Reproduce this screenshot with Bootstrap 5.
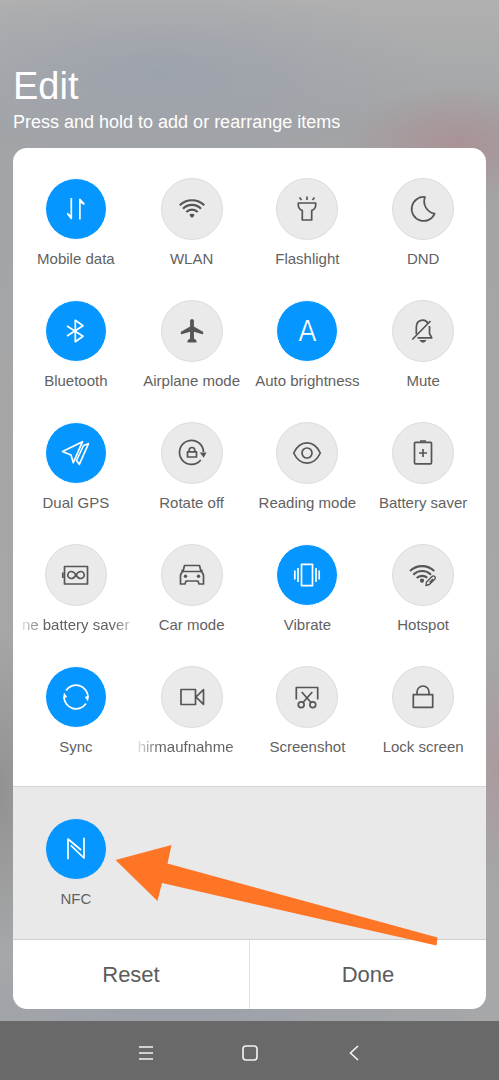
<!DOCTYPE html>
<html lang="en">
<head>
<meta charset="utf-8">
<meta name="viewport" content="width=device-width, initial-scale=1">
<title>Edit quick settings</title>
<link href="https://cdn.jsdelivr.net/npm/bootstrap@5.3.0/dist/css/bootstrap.min.css" rel="stylesheet">
<style>
  body {
    font-family: "Liberation Sans", Arial, sans-serif;
    color: #626262;
    background:
      radial-gradient(120px 60px at 92% 145px, rgba(172,142,146,.8) 0, rgba(172,142,146,0) 100%),
      radial-gradient(280px 90px at 32% 75px, rgba(154,161,173,.8) 0, rgba(154,161,173,0) 100%),
      radial-gradient(40px 120px at 100% 770px, rgba(172,152,155,.9) 0, rgba(172,152,155,0) 100%),
      radial-gradient(60px 160px at 0 790px, rgba(143,143,142,.9) 0, rgba(143,143,142,0) 100%),
      radial-gradient(300px 60px at 35% 1010px, rgba(152,158,170,.7) 0, rgba(152,158,170,0) 100%),
      linear-gradient(#b0b0b0 0, #a2a4a6 130px, #a6a6a6 500px, #a5a7a9 100%);
  }
  .page-head { padding: 62px 13px 13px; color: #fff; }
  .page-title { font-size: 38px; line-height: 48px; font-weight: 400; }
  .page-hint { font-size: 18px; line-height: 25px; }
  .panel { margin: 0 13px 12px; border-radius: 14px; background: #fff; }
  .tiles { padding: 30px 5px 0; row-gap: 2px; }
  .tile { height: 120px; color: inherit; font-size: 15px; line-height: 24px; }
  .disc {
    width: 62px; height: 62px; margin-bottom: 7px;
    background: #eaeaea; border: 1px solid #dcdcdc; color: #555;
  }
  .disc.on { background: #0597ff; border-color: #fff; color: #fff; }
  .spare .disc.on { border-color: #e9e9e9; }
  .disc svg {
    width: 32px; height: 32px; overflow: visible;
    fill: none; stroke: currentColor; stroke-width: 1.7; stroke-linejoin: round;
  }
  .disc svg.waves { stroke-width: 2.1; }
  .disc svg .solid { fill: currentColor; stroke: none; }
  .letter { font-family: Inter, sans-serif; font-weight: 300; font-size: 28px; line-height: 28px; }
  .tile-name { white-space: nowrap; }
  .tile-name.rolling {
    width: 108px; overflow: hidden; text-align: left;
    -webkit-mask-image: linear-gradient(90deg, rgba(0,0,0,.2), #000 22px, #000 90px, rgba(0,0,0,.4));
    mask-image: linear-gradient(90deg, rgba(0,0,0,.2), #000 22px, #000 90px, rgba(0,0,0,.4));
  }
  .spare { background: #e9e9e9; border-top: 1px solid #d4d4d4; padding: 31px 5px 1px; }
  .pointer { left: 102px; top: 58px; z-index: 2; width: 323px; height: 102px; pointer-events: none; }
  .actions { border-top: 1px solid #cfcfcf; }
  .action { height: 69px; font-size: 22px; color: #5c5c5c; background: none; }
  .action + .action { border-left: 1px solid #e2e2e2 !important; }
  .sysbar { background: #696969; height: 59px; padding-top: 3px; }
  .sysbar button { width: 104px; }
  .sysbar svg { fill: none; stroke: #f4f4f4; stroke-width: 1.6; }
</style>
</head>
<body class="d-flex flex-column min-vh-100">
<header class="page-head">
  <h1 class="page-title m-0">Edit</h1>
  <p class="page-hint m-0">Press and hold to add or rearrange items</p>
</header>

<main class="panel">
  <div class="tiles row row-cols-4 g-0">
    <button type="button" class="tile col btn p-0 border-0 d-flex flex-column align-items-center">
      <span class="disc on rounded-circle d-flex align-items-center justify-content-center"><svg viewBox="-16 -16 32 32"><path d="M-4.700-11V10"/><path d="M3.900 10.500V-10"/><path class="solid" d="M-4.500 10.700V6.500L-9 3.500V5.500ZM3.700-11V-6.500L8.500-3.700V-5.700Z"/></svg></span>
      <span class="tile-name">Mobile data</span>
    </button>
    <button type="button" class="tile col btn p-0 border-0 d-flex flex-column align-items-center">
      <span class="disc rounded-circle d-flex align-items-center justify-content-center"><svg class="waves" viewBox="-16 -16 32 32"><path d="M-12.300-3.700A17.500 17.500 0 0 1 12.300-3.700M-9-.300A12.500 12.500 0 0 1 9-.300M-5.700 3A8 8 0 0 1 5.700 3"/><path class="solid" d="M-2.500 5.800Q-2.200 4.700 0 4.700T2.500 5.800Q2 7.500 0 9Q-2 7.500-2.500 5.800Z"/></svg></span>
      <span class="tile-name">WLAN</span>
    </button>
    <button type="button" class="tile col btn p-0 border-0 d-flex flex-column align-items-center">
      <span class="disc rounded-circle d-flex align-items-center justify-content-center"><svg viewBox="-16 -16 32 32"><path d="M0-12.500V-9M-7.500-11.500-5.500-9M7.500-11.500 5.500-9M-8.700-6H8.700V-4Q8.700 0 4.700 1.500V11H-4.700V1.500Q-8.700 0-8.700-4Z"/></svg></span>
      <span class="tile-name">Flashlight</span>
    </button>
    <button type="button" class="tile col btn p-0 border-0 d-flex flex-column align-items-center">
      <span class="disc rounded-circle d-flex align-items-center justify-content-center"><svg viewBox="-16 -16 32 32"><path d="M2-12A12 12 0 1 0 11.700 4.700A12.500 12.500 0 0 1 2-12Z"/></svg></span>
      <span class="tile-name">DND</span>
    </button>

    <button type="button" class="tile col btn p-0 border-0 d-flex flex-column align-items-center">
      <span class="disc on rounded-circle d-flex align-items-center justify-content-center"><svg viewBox="-16 -16 32 32"><path d="M-9-5 7 5.300-.700 10.700V-10.700L7-5.300-9 5"/></svg></span>
      <span class="tile-name">Bluetooth</span>
    </button>
    <button type="button" class="tile col btn p-0 border-0 d-flex flex-column align-items-center">
      <span class="disc rounded-circle d-flex align-items-center justify-content-center"><svg viewBox="-16 -16 32 32"><path class="solid" d="M-1.900-10.500Q-1.700-12 0-12T1.900-10.500V-4.500L11 .700Q12 3.300 10.500 3.200L1.900.700 2 7.500 4.500 9.500V11.500H-4.500V9.500L-2 7.500-1.900.700-10.500 3.200Q-12 3.300-11 .700L-1.900-4.500Z"/></svg></span>
      <span class="tile-name">Airplane mode</span>
    </button>
    <button type="button" class="tile col btn p-0 border-0 d-flex flex-column align-items-center">
      <span class="disc on rounded-circle d-flex align-items-center justify-content-center"><span class="letter">A</span></span>
      <span class="tile-name">Auto brightness</span>
    </button>
    <button type="button" class="tile col btn p-0 border-0 d-flex flex-column align-items-center">
      <span class="disc rounded-circle d-flex align-items-center justify-content-center"><svg viewBox="-16 -16 32 32"><path d="M-10.700 8.500 7.500-10M-6.700 3V-3.500C-6.700-12 2.500-12.500 4.800-7.700M6.500-5V2.500L8.800 6.800H-5.500"/><path class="solid" d="M-3.700 9H3.700Q2 11.700 0 11.700T-3.700 9Z"/></svg></span>
      <span class="tile-name">Mute</span>
    </button>

    <button type="button" class="tile col btn p-0 border-0 d-flex flex-column align-items-center">
      <span class="disc on rounded-circle d-flex align-items-center justify-content-center"><svg viewBox="-16 -16 32 32"><path d="M-13.500-1.500 6.500-11.300-2.700 9.700-5 2Z"/><path d="M7.500-7.500 12.500-9.300 3.300 11.300.5 7.500Z" /></svg></span>
      <span class="tile-name">Dual GPS</span>
    </button>
    <button type="button" class="tile col btn p-0 border-0 d-flex flex-column align-items-center">
      <span class="disc rounded-circle d-flex align-items-center justify-content-center"><svg viewBox="-16 -16 32 32"><path d="M8.800 7A12 12 0 1 1 11.500-1"/><path class="solid" d="M7.800-.500H14.500L11.700 4.700Z"/><path d="M-4.500-1.200H4.500V4H-4.500ZM-2.800-1.200V-3Q-2.500-5.500 0-5.500T2.800-3V-1.200"/></svg></span>
      <span class="tile-name">Rotate off</span>
    </button>
    <button type="button" class="tile col btn p-0 border-0 d-flex flex-column align-items-center">
      <span class="disc rounded-circle d-flex align-items-center justify-content-center"><svg viewBox="-16 -16 32 32"><path d="M-13.300 0C-7-13.500 7-13.500 13.300 0C7 13.500-7 13.500-13.300 0Z"/><circle r="5"/></svg></span>
      <span class="tile-name">Reading mode</span>
    </button>
    <button type="button" class="tile col btn p-0 border-0 d-flex flex-column align-items-center">
      <span class="disc rounded-circle d-flex align-items-center justify-content-center"><svg viewBox="-16 -16 32 32"><rect x="-8.500" y="-10.700" width="17" height="21.500" rx="1"/><path d="M-3-12H3M-4 0H4M0-4V4"/></svg></span>
      <span class="tile-name">Battery saver</span>
    </button>

    <button type="button" class="tile col btn p-0 border-0 d-flex flex-column align-items-center">
      <span class="disc rounded-circle d-flex align-items-center justify-content-center"><svg viewBox="-16 -16 32 32"><rect x="-11.500" y="-8.500" width="23" height="17.500"/><path d="M-13.200-2.500V3M0 0C-2-3.300-4-3.500-4.700-3.500A3.500 3.500 0 0 0-4.700 3.500C-4 3.500-2 3.300 0 0C2-3.300 4-3.500 4.700-3.500A3.500 3.500 0 0 1 4.700 3.500C4 3.500 2 3.300 0 0Z"/></svg></span>
      <span class="tile-name rolling">ne battery saver</span>
    </button>
    <button type="button" class="tile col btn p-0 border-0 d-flex flex-column align-items-center">
      <span class="disc rounded-circle d-flex align-items-center justify-content-center"><svg viewBox="-16 -16 32 32"><path d="M-9-3.500-7.500-9.500H7.500L9-3.500M-9-3.500H9Q11.500-2 11.500 1V9H7L6 6H-6L-7 9H-11.500V1Q-11.500-2-9-3.500ZM-9-3.500-10.500-5M9-3.500 10.500-5"/><circle class="solid" cx="-6.500" cy="1.300" r="1.700"/><circle class="solid" cx="6.500" cy="1.300" r="1.700"/></svg></span>
      <span class="tile-name">Car mode</span>
    </button>
    <button type="button" class="tile col btn p-0 border-0 d-flex flex-column align-items-center">
      <span class="disc on rounded-circle d-flex align-items-center justify-content-center"><svg viewBox="-16 -16 32 32"><path d="M-5.500-10.700H5.500V10.700H-5.500ZM-9-7V7M9-7V7M-12.200-4.500V4.500M12.200-4.500V4.500"/></svg></span>
      <span class="tile-name">Vibrate</span>
    </button>
    <button type="button" class="tile col btn p-0 border-0 d-flex flex-column align-items-center">
      <span class="disc rounded-circle d-flex align-items-center justify-content-center"><svg class="waves" viewBox="-16 -16 32 32"><path d="M-13-4A17.500 17.500 0 0 1 11.200-4M-9.700-.300A12.500 12.500 0 0 1 8-.300M-6.300 3A8 8 0 0 1 4.300 2.700"/><circle class="solid" cx="-1" cy="5.700" r="2.100"/><path stroke-width="1.400" d="M3.500 7 9 1.500C10.500 0 13.300 1.700 12 4L6.300 9.500 3 10.500ZM6.500 7.500 10 4"/></svg></span>
      <span class="tile-name">Hotspot</span>
    </button>

    <button type="button" class="tile col btn p-0 border-0 d-flex flex-column align-items-center">
      <span class="disc on rounded-circle d-flex align-items-center justify-content-center"><svg viewBox="-16 -16 32 32"><path d="M-10-6.500A12 12 0 0 1 12 0M10 6.500A12 12 0 0 1-12 0"/><path class="solid" d="M8.800 0 13-1.500 12 4.500ZM-8.800 0-13 1.500-12-4.500Z"/></svg></span>
      <span class="tile-name">Sync</span>
    </button>
    <button type="button" class="tile col btn p-0 border-0 d-flex flex-column align-items-center">
      <span class="disc rounded-circle d-flex align-items-center justify-content-center"><svg viewBox="-16 -16 32 32"><path d="M-11-7.500H3.500V7.500H-11ZM4 0 11.500-7.300V7.300Z"/></svg></span>
      <span class="tile-name rolling">hirmaufnahme</span>
    </button>
    <button type="button" class="tile col btn p-0 border-0 d-flex flex-column align-items-center">
      <span class="disc rounded-circle d-flex align-items-center justify-content-center"><svg viewBox="-16 -16 32 32"><path d="M-10.700 2.500V-9.500H10.700V2.500M-5.300-5 4 5.500M5.300-5-4 5.500"/><circle cx="-5.800" cy="7.700" r="2.900"/><circle cx="5.800" cy="7.700" r="2.900"/></svg></span>
      <span class="tile-name">Screenshot</span>
    </button>
    <button type="button" class="tile col btn p-0 border-0 d-flex flex-column align-items-center">
      <span class="disc rounded-circle d-flex align-items-center justify-content-center"><svg viewBox="-16 -16 32 32"><path d="M-9.700-2.300H9.700V10.300H-9.700ZM-6-2.300V-5A6 6 0 0 1 6-5V-2.300"/></svg></span>
      <span class="tile-name">Lock screen</span>
    </button>
  </div>

  <section class="spare position-relative">
    <div class="row row-cols-4 g-0">
      <button type="button" class="tile col btn p-0 border-0 d-flex flex-column align-items-center">
        <span class="disc on rounded-circle d-flex align-items-center justify-content-center"><svg viewBox="-16 -16 32 32" stroke-linecap="square"><path d="M-8 9.500V-10L4.500.5M-4.500-3 8 9V-10.500"/></svg></span>
        <span class="tile-name">NFC</span>
      </button>
    </div>
    <svg class="pointer position-absolute" viewBox="0 0 323 102" aria-hidden="true"><path fill="#ff7526" d="M.5 15 56.500 0 52.500 18.500 322.500 92.500 321.500 100.500 47 38 42.500 56Z"/></svg>
  </section>

  <div class="actions d-flex">
    <button type="button" class="action col border-0 p-0">Reset</button>
    <button type="button" class="action col border-0 p-0">Done</button>
  </div>
</main>

<nav class="sysbar d-flex justify-content-center mt-auto" aria-label="System">
  <button type="button" class="btn border-0 p-0" aria-label="Recent apps"><svg width="16" height="16" viewBox="0 0 16 16"><path d="M1 2H15M1 8H15M1 14H15"/></svg></button>
  <button type="button" class="btn border-0 p-0" aria-label="Home"><svg width="16" height="16" viewBox="0 0 16 16"><rect x="1" y="1" width="14" height="14" rx="3"/></svg></button>
  <button type="button" class="btn border-0 p-0" aria-label="Back"><svg width="16" height="16" viewBox="0 0 16 16"><path d="M12 1 4.500 8 12 15"/></svg></button>
</nav>
<script src="https://cdn.jsdelivr.net/npm/bootstrap@5.3.0/dist/js/bootstrap.bundle.min.js"></script>
</body>
</html>
